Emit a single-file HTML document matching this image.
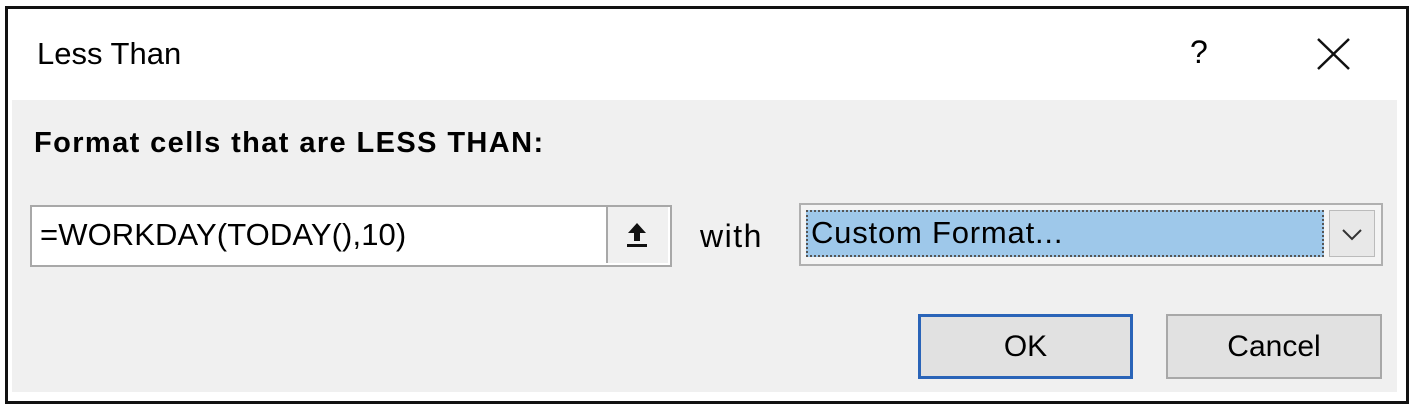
<!DOCTYPE html>
<html><head><style>
body{margin:0;width:1417px;height:414px;background:#fff;position:relative;overflow:hidden;font-family:"Liberation Sans",sans-serif;color:#000}
.abs{position:absolute}
#frame{left:5px;top:6px;width:1398px;height:392px;border:3px solid #111;background:#fff}
#gray{left:12px;top:100px;width:1385px;height:292px;background:#f0f0f0}
.t{white-space:nowrap}
</style></head><body>
<div class="abs" id="frame"></div>
<div class="abs" id="gray"></div>
<div class="abs t" style="left:37px;top:36px;font-size:31px;">Less Than</div>
<div class="abs t" style="left:1190px;top:34px;font-size:32px;">?</div>
<svg class="abs" style="left:1315px;top:36px" width="38" height="36"><path d="M3 3L34 33M34 3L3 33" stroke="#111" stroke-width="2.5" fill="none"/></svg>
<div class="abs t" style="left:34px;top:127px;font-size:29px;font-weight:bold;letter-spacing:1.4px">Format cells that are LESS THAN:</div>
<div class="abs" style="left:30px;top:205px;width:638px;height:58px;border:2px solid #a8a8a8;background:#fff"></div>
<div class="abs t" style="left:40px;top:217px;font-size:31px;letter-spacing:0.1px">=WORKDAY(TODAY(),10)</div>
<div class="abs" style="left:606px;top:207px;width:60px;height:56px;background:#f0f0f0;border-left:2px solid #a8a8a8"></div>
<svg class="abs" style="left:624px;top:220px" width="26" height="30"><path d="M13 3L4 13H10V21H16V13H22Z" fill="#111"/><rect x="3" y="24" width="20" height="3" fill="#111"/></svg>
<div class="abs t" style="left:700px;top:218px;font-size:32px;letter-spacing:1.5px">with</div>
<div class="abs" style="left:799px;top:203px;width:580px;height:59px;border:2px solid #b0b0b0;background:#f4f4f4"></div>
<div class="abs" style="left:806px;top:210px;width:518px;height:47px;background:#9ec8ea;border:2px dotted #555;box-sizing:border-box"></div>
<div class="abs t" style="left:811px;top:215px;font-size:31px;letter-spacing:0.8px">Custom Format...</div>
<div class="abs" style="left:1329px;top:210px;width:46px;height:47px;background:#e8e8e8;border:1px solid #bbb;box-sizing:border-box"></div>
<svg class="abs" style="left:1340px;top:226px" width="24" height="16"><path d="M3 4L12 13L21 4" stroke="#333" stroke-width="2" fill="none"/></svg>
<div class="abs" style="left:918px;top:314px;width:209px;height:59px;border:3px solid #2a64b8;background:#e1e1e1;text-align:center;line-height:59px;font-size:30px">OK</div>
<div class="abs" style="left:1166px;top:314px;width:212px;height:61px;border:2px solid #a8a8a8;background:#e1e1e1;text-align:center;line-height:61px;font-size:30px">Cancel</div>
</body></html>
